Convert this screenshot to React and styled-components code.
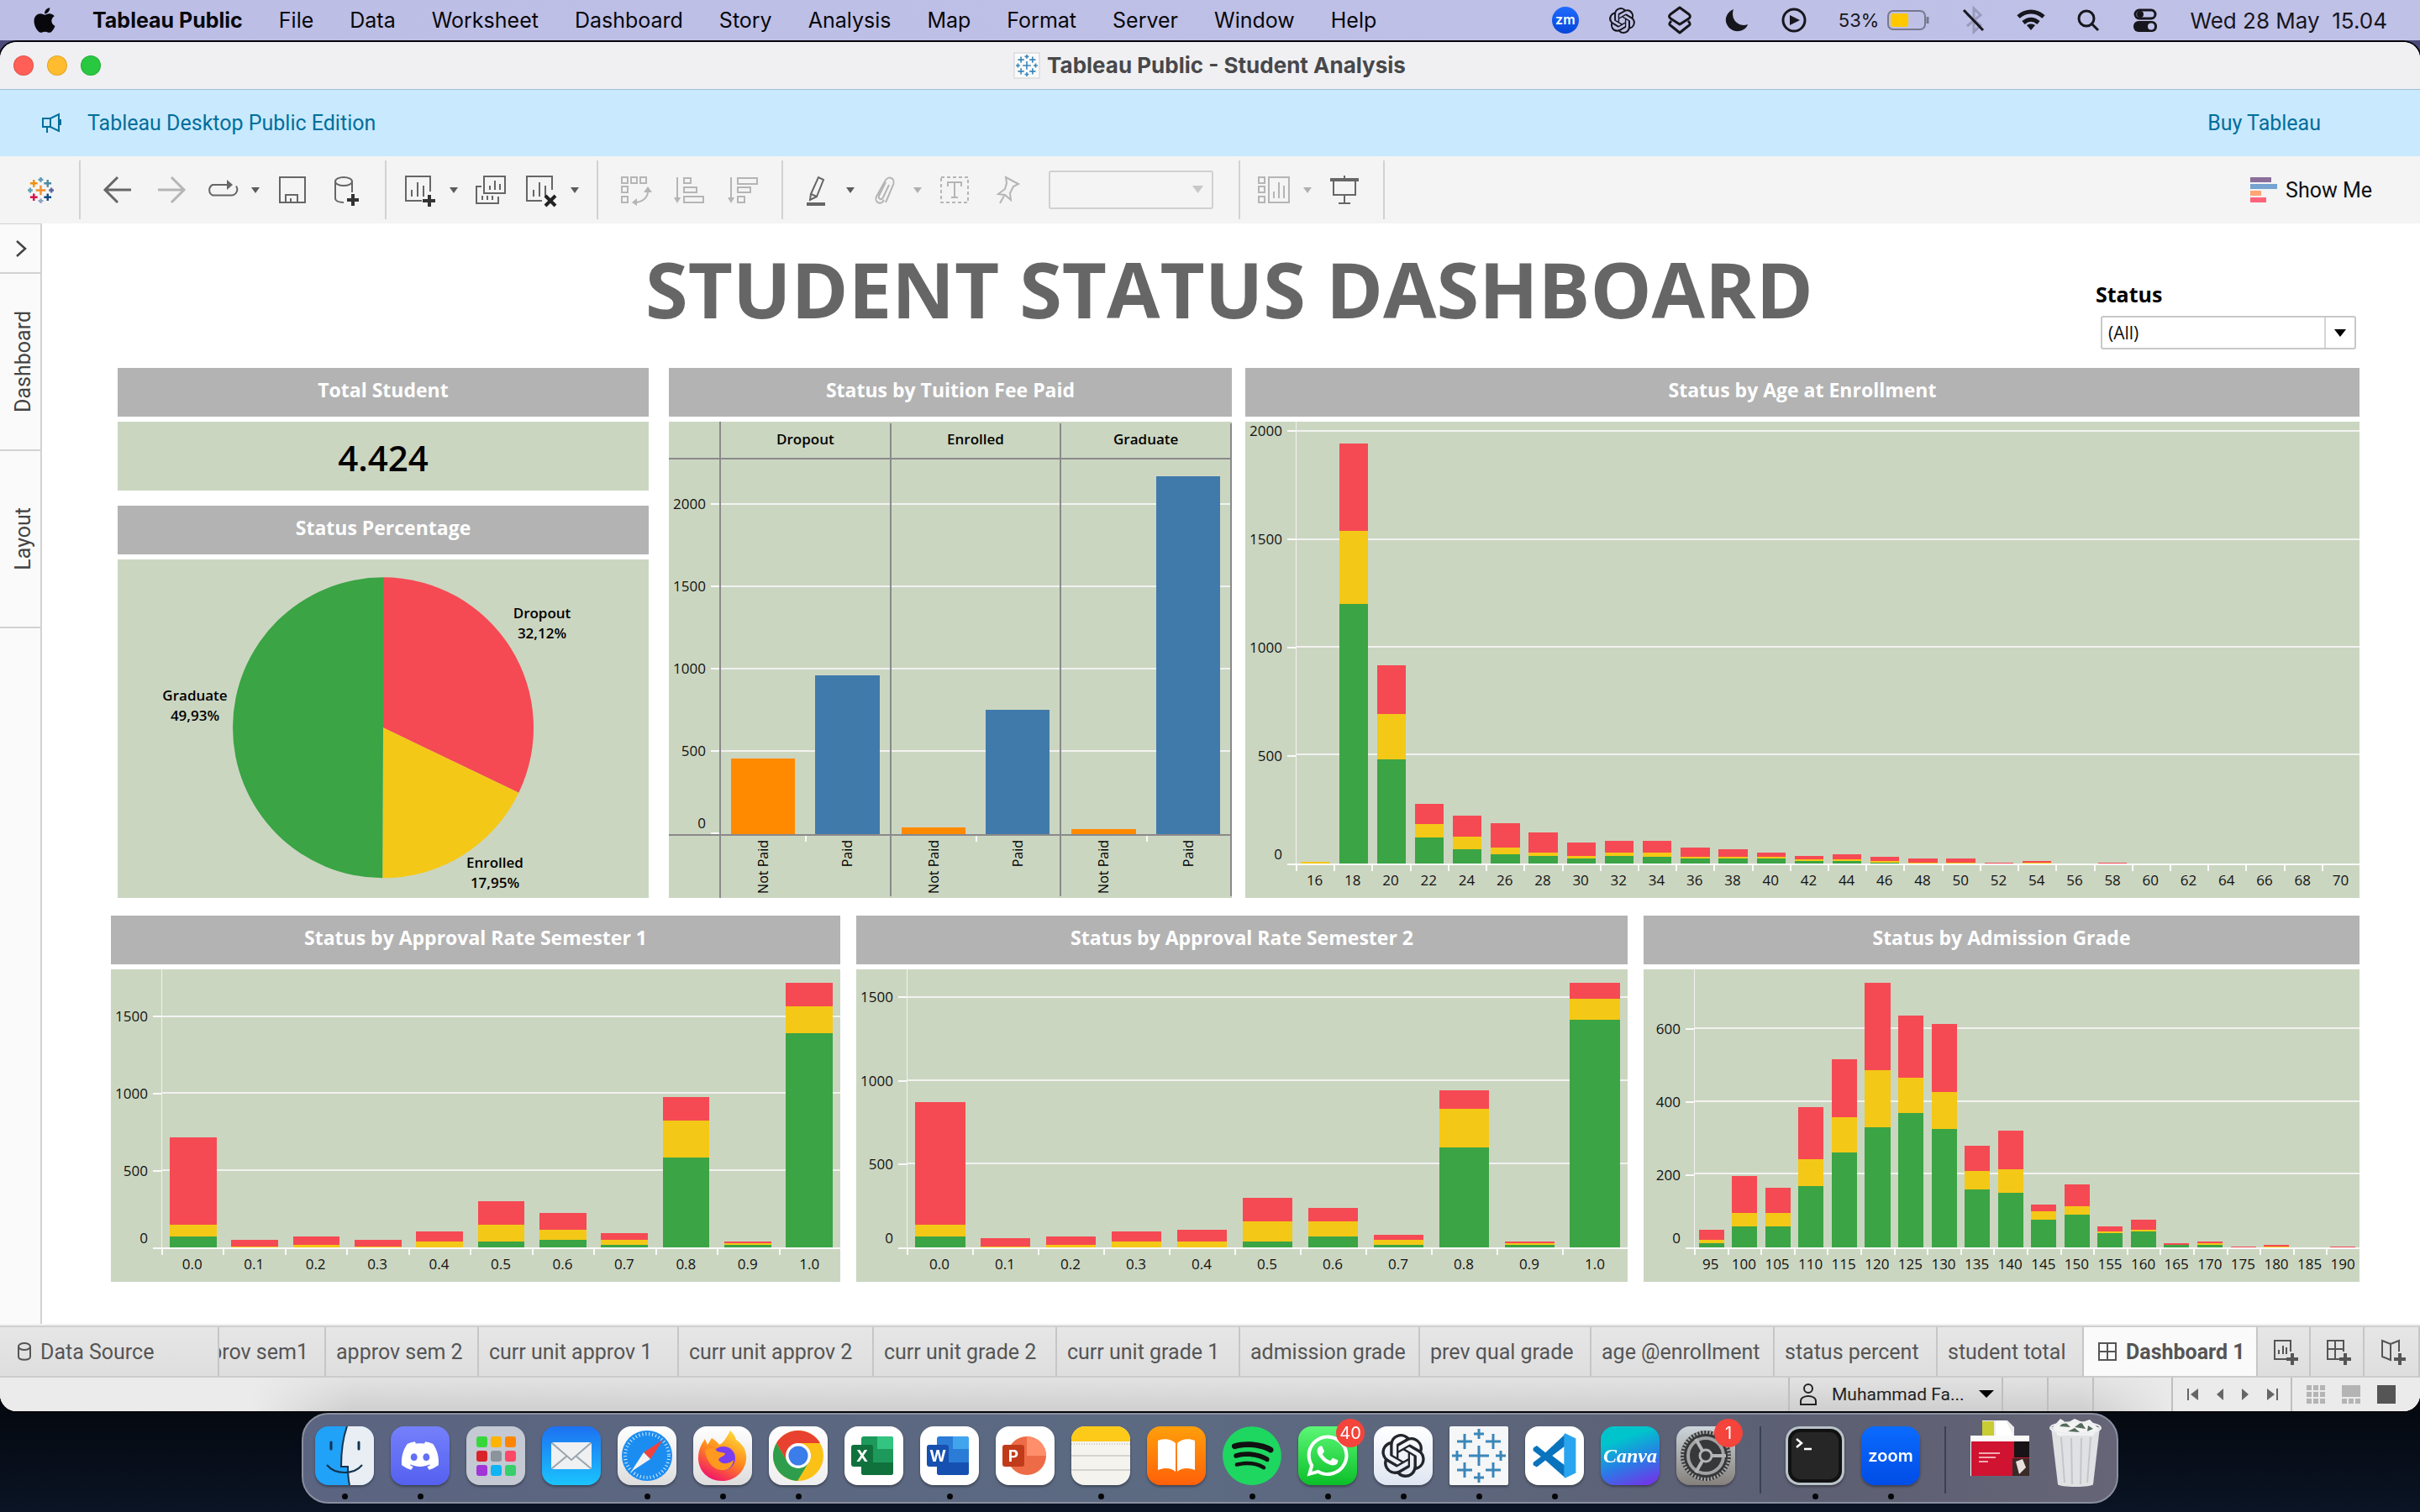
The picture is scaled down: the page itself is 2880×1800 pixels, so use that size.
import React from "react";
import styled, { createGlobalStyle, css } from "styled-components";
import { FaApple, FaDiscord, FaSpotify, FaWhatsapp } from "react-icons/fa";
import { SiOpenai } from "react-icons/si";

const MAC = `Inter, "Liberation Sans", sans-serif`;
const UI = `Roboto, "Liberation Sans", sans-serif`;
const VIZ = `"Open Sans", "Noto Sans", sans-serif`;

const RED = "#f54a53";
const YELLOW = "#f4c817";
const GREEN = "#3ba445";
const BLUE = "#407aab";
const ORANGE = "#ff8a00";
const SAGE = "#cbd6c1";
const GRID = "#f2f2f0";
const RULE = "#8a8a8a";

const Global = createGlobalStyle`
  *, *::before, *::after { box-sizing: border-box; }
  html, body, #root { height: 100%; }
  body { margin: 0; background: #04070d; font-family: ${UI}; }
  button { border: 0; background: none; padding: 0; margin: 0; font: inherit; color: inherit; }
  svg { display: block; flex: none; overflow: visible; }
`;

const Screen = styled.div`
  height: 100vh;
  display: flex;
  flex-direction: column;
  background: linear-gradient(#4b4a7a 0, #4b4a7a 90px, #04070d 200px, #04070d 92%, #0a1424 100%);
`;

/* ---------- macOS menu bar ---------- */

const MenuBar = styled.header`
  height: 48px;
  flex: none;
  display: flex;
  align-items: center;
  justify-content: space-between;
  padding: 0 39px;
  background: linear-gradient(90deg, #bdbee5, #c0c1e7);
  font-family: ${MAC};
  font-size: 25px;
  color: #08080c;
`;

const MenuList = styled.nav`
  display: flex;
  align-items: center;
  gap: 43px;
`;

const AppleMenu = styled.button`
  width: 28px;
  display: flex;
  justify-content: center;
`;

const MenuItem = styled.button`
  line-height: 32px;
  font-weight: ${(p) => (p.$app ? 700 : 400)};
  white-space: nowrap;
`;

const StatusItems = styled.div`
  display: flex;
  align-items: center;
  gap: 38px;
  color: #16161d;
`;

const StatusSlot = styled.button`
  width: 30px;
  height: 40px;
  display: flex;
  align-items: center;
  justify-content: center;
`;

const ZoomBadge = styled.span`
  flex: none;
  width: 32px;
  height: 32px;
  border-radius: 50%;
  background: linear-gradient(#1f6bff, #0646d8);
  color: #fff;
  font-size: 16px;
  font-weight: 600;
  line-height: 30px;
  text-align: center;
`;

const Battery = styled.span`
  display: flex;
  align-items: center;
  gap: 10px;
  font-size: 22px;
`;

const Clock = styled.time`
  font-size: 26px;
  white-space: pre;
`;

/* ---------- window chrome ---------- */

const Window = styled.main`
  flex: 1;
  min-height: 0;
  margin-top: 2px;
  margin-bottom: 120px;
  display: flex;
  flex-direction: column;
  border-radius: 20px;
  overflow: hidden;
  background: #fff;
  box-shadow: 0 0 0 2px #05050a;
`;

const TitleBar = styled.div`
  height: 57px;
  flex: none;
  display: grid;
  grid-template-columns: 1fr auto 1fr;
  align-items: center;
  padding: 0 16px;
  background: #f0f0f2;
  border-bottom: 1px solid #9dbfd6;
`;

const Lights = styled.div`
  display: flex;
  gap: 16px;
`;

const Light = styled.button`
  width: 24px;
  height: 24px;
  border-radius: 50%;
  background: ${(p) => p.$color};
  box-shadow: inset 0 0 0 1px rgba(0, 0, 0, 0.12);
`;

const WindowTitle = styled.h1`
  margin: 0;
  display: flex;
  align-items: center;
  gap: 9px;
  font-family: ${MAC};
  font-size: 26px;
  font-weight: 700;
  line-height: 32px;
  color: #48484b;
`;

const Banner = styled.div`
  height: 79px;
  flex: none;
  display: flex;
  align-items: center;
  padding: 0 118px 0 50px;
  gap: 30px;
  background: #c9e9ff;
  color: #006f9b;
`;

const BannerLink = styled.a`
  color: inherit;
  text-decoration: none;
  font-size: 25px;
  line-height: 32px;
  ${(p) => p.$end && css`margin-left: auto;`}
`;

const Toolbar = styled.div`
  height: 80px;
  flex: none;
  display: flex;
  align-items: center;
  background: #f4f4f4;
`;

const ToolGroup = styled.div`
  height: 70px;
  display: flex;
  align-items: center;
  padding: ${(p) => (p.$logo ? "0 30px 0 33px" : "0 14px 0 12px")};
  border-right: 2px solid #d2d2d2;
`;

const ToolButton = styled.button`
  width: ${(p) => (p.$menu ? 56 : 64)}px;
  height: 48px;
  display: flex;
  align-items: center;
  justify-content: center;
  color: ${(p) => (p.$off ? "#b5b5b5" : "#666")};
`;

const CaretButton = styled.button`
  width: 24px;
  height: 48px;
  display: flex;
  align-items: center;
  justify-content: center;
  color: ${(p) => (p.$off ? "#b0b0b0" : "#5c5c5c")};
`;

const Combo = styled.div`
  display: grid;
  align-items: center;
  margin: ${(p) => (p.$tool ? "0 16px" : "0 2px 0 6px")};
  width: ${(p) => (p.$tool ? 196 : 304)}px;
  & > * { grid-area: 1 / 1; }
  & > svg { justify-self: end; pointer-events: none; z-index: 1; }
`;

const Select = styled.select`
  appearance: none;
  opacity: 1;
  width: 100%;
  height: ${(p) => (p.$tool ? 46 : 40)}px;
  padding: 0 48px 0 7px;
  border: 2px solid ${(p) => (p.$tool ? "#d0d0d0" : "#c8c8c8")};
  border-radius: 3px;
  background: ${(p) => (p.$tool ? "#f4f4f4" : "#fff")};
  font-family: ${VIZ};
  font-size: 21px;
  color: #111;
`;

const ShowMe = styled.button`
  margin-left: auto;
  margin-right: 57px;
  display: flex;
  align-items: center;
  gap: 10px;
  font-size: 25px;
  color: #111;
`;

/* ---------- workspace ---------- */

const Workspace = styled.div`
  flex: 1;
  min-height: 0;
  display: flex;
  border-bottom: 2px solid #f1f1f1;
`;

const SidePane = styled.aside`
  width: 50px;
  flex: none;
  display: flex;
  flex-direction: column;
  background: #fafafa;
  border-right: 2px solid #d2d2d2;
  border-top: 1px solid #d2d2d2;
`;

const SideTab = styled.button`
  height: ${(p) => (p.$toggle ? 59 : 211)}px;
  padding-left: ${(p) => (p.$toggle ? 2 : 6)}px;
  display: flex;
  align-items: center;
  justify-content: center;
  border-bottom: 2px solid #d2d2d2;
  font-size: 25px;
  color: #444;
`;

const Upright = styled.span`
  writing-mode: vertical-rl;
  rotate: 180deg;
`;

const Dashboard = styled.section`
  flex: 1;
  min-width: 0;
  display: flex;
  flex-direction: column;
  padding-bottom: 50px;
`;

const Heading = styled.div`
  height: 172px;
  flex: none;
  display: grid;
  grid-template-columns: 1fr auto 1fr;
  padding: 0 74px 0 70px;
`;

const DashTitle = styled.h2`
  grid-column: 2;
  margin: 0;
  padding-top: 18px;
  font-family: ${VIZ};
  font-size: 92px;
  font-weight: 700;
  line-height: 120px;
  color: #666;
  white-space: nowrap;
`;

const Filter = styled.div`
  justify-self: end;
  padding-top: 68px;
`;

const FilterLabel = styled.label`
  display: block;
  margin-bottom: 10px;
  font-family: ${VIZ};
  font-size: 25px;
  font-weight: 700;
  line-height: 32px;
  color: #000;
`;

const Row = styled.div`
  display: grid;
  min-height: 0;
  grid-template-rows: minmax(0, 1fr);
  ${(p) =>
    p.$upper
      ? css`
          flex: 630 1 0;
          grid-template-columns: 640fr 670fr 1326fr;
          gap: 16px;
          padding: 0 72px 0 90px;
          margin-bottom: 21px;
        `
      : css`
          flex: 436 1 0;
          grid-template-columns: 868fr 918fr 852fr;
          gap: 19px;
          padding: 0 72px 0 82px;
        `}
`;

const Stack = styled.div`
  display: flex;
  flex-direction: column;
  gap: 18px;
  min-height: 0;
  padding-right: 8px;
`;

const Card = styled.article`
  display: flex;
  flex-direction: column;
  gap: 6px;
  min-width: 0;
  min-height: 0;
  ${(p) => p.$fill && css`flex: 1;`}
`;

const CardTitle = styled.h3`
  margin: 0;
  height: 58px;
  flex: none;
  padding-top: 10px;
  background: #b3b3b3;
  color: #fff;
  font-family: ${VIZ};
  font-size: 23px;
  font-weight: 700;
  line-height: 32px;
  text-align: center;
`;

const Total = styled.div`
  height: 82px;
  background: ${SAGE};
  font-family: ${VIZ};
  font-size: 42px;
  font-weight: 600;
  line-height: 86px;
  text-align: center;
`;

const ChartBody = styled.div`
  flex: 1;
  min-height: 0;
  display: grid;
  background: ${SAGE};
  font-family: ${VIZ};
  font-size: 17px;
  color: #111;
  grid-template-columns: 60px minmax(0, 1fr);
  grid-template-rows: ${(p) => (p.$facets ? "43px minmax(0, 1fr) 74px" : "minmax(0, 1fr) 39px")};
`;

const YAxis = styled.div`
  display: flex;
  flex-direction: column-reverse;
  min-height: 0;
  ${(p) => p.$ruled && css`border-top: 2px solid ${RULE}; border-bottom: 2px solid ${RULE};`}
`;

const YBand = styled.div`
  display: flex;
  align-items: flex-end;
  justify-content: flex-end;
  min-height: 0;
`;

const YLabel = styled.span`
  line-height: 24px;
  margin-bottom: ${(p) => (p.$zero ? 1 : -11)}px;
  margin-right: 6px;
`;

const YTick = styled.span`
  width: 10px;
  height: 2px;
  background: #fafafa;
`;

const Plot = styled.div`
  display: grid;
  min-height: 0;
  min-width: 0;
  grid-template: minmax(0, 1fr) / minmax(0, 1fr);
  & > * { grid-area: 1 / 1; }
  ${(p) =>
    p.$facet
      ? css`border: 2px solid ${RULE}; border-left-width: 0;`
      : css`border-bottom: 2px solid #fafafa; border-left: 1px solid ${GRID};`}
`;

const Lines = styled.div`
  display: flex;
  flex-direction: column-reverse;
`;

const Line = styled.div`
  min-height: 0;
  border-bottom: ${(p) => (p.$zero ? 0 : 2)}px solid ${GRID};
`;

const Bars = styled.div`
  display: grid;
  grid-template-columns: repeat(${(p) => p.$count}, minmax(0, 1fr));
  justify-items: center;
`;

const Bar = styled.div`
  width: 76%;
  height: 100%;
  display: flex;
  flex-direction: column-reverse;
`;

const Segment = styled.span`
  flex: none;
  background: ${(p) => p.$color};
`;

const XAxis = styled.div`
  grid-column: 2;
  display: grid;
  grid-template-columns: repeat(${(p) => p.$count}, minmax(0, 1fr));
`;

const XCell = styled.span`
  line-height: 22px;
  text-align: center;
  &::before {
    content: "";
    display: block;
    width: 2px;
    height: 7px;
    background: #fafafa;
  }
`;

const Facets = styled.div`
  display: grid;
  grid-template-columns: repeat(3, minmax(0, 1fr));
  min-height: 0;
  ${(p) => p.$framed && css`border-left: 2px solid ${RULE};`}
`;

const FacetHead = styled.span`
  margin-top: 2px;
  border-right: 2px solid ${RULE};
  font-weight: 600;
  font-size: 17px;
  line-height: 38px;
  text-align: center;
  color: #000;
`;

const FacetFoot = styled.div`
  display: grid;
  grid-template-columns: 1fr 1fr;
  margin-bottom: 2px;
  border-right: 2px solid ${RULE};
`;

const FootCell = styled.span`
  display: flex;
  justify-content: center;
  align-items: flex-start;
  padding-top: 5px;
  font-size: 16px;
  line-height: 20px;
  color: #000;
  background: ${(p) => (p.$tick ? "linear-gradient(#fafafa, #fafafa) left top / 2px 7px no-repeat" : "none")};
`;

const PieBox = styled.div`
  flex: 1;
  min-height: 0;
  background: ${SAGE};
  & > svg { width: 100%; height: 100%; }
  text { font-family: ${VIZ}; font-size: 17px; font-weight: 600; text-anchor: middle; fill: #000; }
`;

/* ---------- sheet tabs and status bar ---------- */

const Tabs = styled.div`
  height: 62px;
  flex: none;
  display: grid;
  grid-template-columns: 261fr 127fr 182fr 238fr 232fr 218fr 218fr 214fr 204fr 218fr 194fr 174fr 207fr 63fr 64fr 66fr;
  background: linear-gradient(#e6e6e6, #dedede);
  border-top: 2px solid #cfcfcf;
  border-bottom: 2px solid #cbcbcb;
`;

const Tab = styled.button`
  display: flex;
  align-items: center;
  gap: 10px;
  min-width: 0;
  overflow: hidden;
  white-space: nowrap;
  padding: 0 12px;
  border-right: 2px solid #c6c6c6;
  font-size: 25px;
  color: #555;
  ${(p) => p.$first && css`padding-left: 20px;`}
  ${(p) => p.$cut && css`justify-content: flex-end; padding-right: 19px;`}
  ${(p) => p.$icon && css`justify-content: center; padding: 0 0 0 4px;`}
  ${(p) => p.$active && css`background: #fafafa; font-weight: 700; padding: 0 10px 0 16px;`}
`;

const StatusBar = styled.footer`
  height: 40px;
  flex: none;
  display: flex;
  justify-content: flex-end;
  background:
    linear-gradient(90deg, #ebebeb 300px, transparent 420px, transparent 86%, #ebebeb 90%),
    linear-gradient(#e2e2e2, #cfcfcf);
`;

const StatusCell = styled.div`
  width: ${(p) => p.$w}px;
  display: flex;
  align-items: center;
  gap: 20px;
  padding-left: ${(p) => (p.$icons ? 17 : 0)}px;
  border-left: 2px solid #bfbfbf;
  color: #666;
`;

const User = styled.button`
  display: flex;
  align-items: center;
  gap: 17px;
  padding-left: 11px;
  font-size: 21px;
  color: #222;
`;

/* ---------- dock ---------- */

const Dock = styled.nav`
  position: fixed;
  left: 50%;
  bottom: 10px;
  translate: -50% 0;
  height: 108px;
  display: flex;
  align-items: flex-start;
  gap: 20px;
  padding: 14px 14px 0;
  border: 2px solid #8a8fa0;
  border-radius: 32px;
  background: linear-gradient(90deg, #5b6480, #5c6a82 50%, #5d5f72 85%, #656577);
`;

const DockItem = styled.button`
  position: relative;
  width: 70px;
  height: 92px;
  display: flex;
  align-items: flex-start;
  &::after {
    content: "";
    position: absolute;
    left: 32px;
    bottom: 5px;
    width: 7px;
    height: 7px;
    border-radius: 50%;
    background: ${(p) => (p.$open ? "#050608" : "transparent")};
  }
`;

const Tile = styled.span`
  width: 70px;
  height: 70px;
  flex: none;
  display: flex;
  align-items: center;
  justify-content: center;
  border-radius: 16px;
  overflow: hidden;
  background: ${(p) => p.$bg || "transparent"};
  color: ${(p) => p.$fg || "#fff"};
  ${(p) => !p.$flat && css`box-shadow: 0 2px 3px rgba(0, 0, 0, 0.35);`}
  ${(p) => p.$square && css`border-radius: 2px;`}
  ${(p) => p.$flat && css`overflow: visible;`}
`;

const Word = styled.span`
  font-family: ${(p) => (p.$script ? `"Liberation Serif", serif` : MAC)};
  font-style: ${(p) => (p.$script ? "italic" : "normal")};
  font-size: ${(p) => (p.$script ? 24 : 20)}px;
  font-weight: 600;
`;

const Badge = styled.span`
  position: absolute;
  right: -9px;
  top: -9px;
  width: 34px;
  height: 34px;
  border-radius: 50%;
  background: #f4443b;
  color: #fff;
  font-family: ${MAC};
  font-size: 20px;
  line-height: 34px;
  text-align: center;
`;

const DockRule = styled.span`
  width: 2px;
  height: 80px;
  margin: 0 9px;
  background: #3b4054;
`;

/* ---------- drawings ---------- */

const I = ({ w = 36, h = 36, children, ...rest }) => (
  <svg width={w} height={h} viewBox={`0 0 ${w} ${h}`} fill="none" stroke="currentColor" strokeWidth="2" aria-hidden="true" {...rest}>
    {children}
  </svg>
);

const Caret = () => (
  <svg width="10" height="8" viewBox="0 0 10 8" aria-hidden="true"><path d="M0 1h10L5 8z" fill="currentColor" /></svg>
);

const plus = (x, y, r) => `M${x - r} ${y}h${2 * r}M${x} ${y - r}v${2 * r}`;

const TableauMark = ({ size, colors, w = 2 }) => {
  const spots = [
    [16, 16, 6], [7.5, 7.5, 4.5], [24.5, 7.5, 4.5], [7.5, 24.5, 4.5], [24.5, 24.5, 4.5],
    [16, 3, 3], [16, 29, 3], [3, 16, 3], [29, 16, 3],
  ];
  return (
    <svg width={size} height={size} viewBox="0 0 32 32" aria-hidden="true">
      {spots.map(([x, y, r], i) => (
        <path key={i} d={plus(x, y, r)} stroke={colors[i % colors.length]} strokeWidth={w} />
      ))}
    </svg>
  );
};

const LOGO = ["#f28e2b", "#f0900f", "#4e8aa0", "#d3134b", "#114a86", "#5b9bb5", "#8ea3c4", "#5fa5b8", "#5b659c"];

const Icons = {
  back: <I><path d="M34 18H3M18 3 3 18l15 15" strokeWidth="3" /></I>,
  forward: <I><path d="M2 18h31M18 3l15 15-15 15" strokeWidth="3" /></I>,
  replay: <I w={42}><path d="M31 12H10a7 7 0 0 0 0 12.500H33a7 7 0 0 0 5-11" /><path d="m27 6 7 6-7 6z" fill="currentColor" stroke="none" /></I>,
  save: <I><path d="M3 3h30v30H3zM10 33V24h14v9M16 33v-5" /></I>,
  data: <I w={32}><ellipse cx="13" cy="8" rx="10" ry="5" /><path d="M3 8v20c0 3 4 5 10 5M23 8v13" /><path d="M17 30h14M24 23v14" strokeWidth="4" stroke="#333" /></I>,
  newSheet: <I w={38}><path d="M31 20V2H2v29h19M9 26v-8M16 26V9M23 26v-13" /><path d="M22 31h15M30 24v14" strokeWidth="4" stroke="#333" /></I>,
  copySheet: <I w={38}><path d="M11 2h25v20H11zM18 18v-5M24 18V7M30 18v-7M8 14H2v20h26v-8M9 30v-5M15 30v-5M21 30v-5" /></I>,
  clearSheet: <I w={38}><path d="M32 18V2H2v29h18M10 26v-8M17 26V9M24 26v-13" /><path d="m24 25 12 12M36 25 24 37" strokeWidth="4" stroke="#222" /></I>,
  swap: <I><path d="M2 3h7v7H2zM13 3h7v7h-7zM24 3h7v7h-7zM2 14h7v7H2zM2 26h7v7H2zM33 20c0 7-6 12-14 13" /><path d="m28 21 5-7 5 7zM20 28v9l-6-4z" fill="currentColor" stroke="none" /></I>,
  sortAsc: <I><path d="M4 3v24M12 4h8v6h-8zM12 15h15v6H12zM12 26h23v7H12z" /><path d="M0 27h8l-4 7z" fill="currentColor" stroke="none" /></I>,
  sortDesc: <I><path d="M4 3v24M12 4h23v7H12zM12 15h15v6H12zM12 26h8v7h-8z" /><path d="M0 27h8l-4 7z" fill="currentColor" stroke="none" /></I>,
  pen: <I w={24}><path d="m5 23 9-20 6 3-8 20zM5 23l-1 7 8-4" /><path d="M0 35h22" strokeWidth="4" /></I>,
  clip: <I w={26}><path d="M19 12 12 27c-2 4-6 2-5-2l8-16M15 33 24 12c3-8-6-12-10-4L4 26c-3 7 6 11 9 4" /></I>,
  text: <I><path d="M2 3h32v30H2z" strokeDasharray="4 3" /><path d="M10 14V9h16v5M18 9v18M14 27h8" /></I>,
  pin: <I w={28}><path d="m11 3 15 8-6 3-4 8 1 8-7-6-8-1 8-6 2-7zM9 25 4 34" /></I>,
  cards: <I w={40}><path d="M2 3h7v7H2zM2 14h7v7H2zM2 26h7v7H2zM14 3h24v30H14zM20 28v-8M26 28V9M32 28V13" /></I>,
  present: <I><path d="M1 6h34" strokeWidth="4" /><path d="M18 1v4M5 8v16h26V8M18 24v10M11 34h14" /></I>,
};

const finder = (
  <svg width="70" height="70" viewBox="0 0 70 70">
    <path fill="#1fa2f8" d="M0 0h70v70H0z" />
    <path fill="#e8eef4" d="M38 0h32v70H41c-2-9-2-15-2-22h-8C31 30 33 14 38 0z" />
    <path d="M19 19v8M52 19v8" stroke="#14334f" strokeWidth="3" strokeLinecap="round" />
    <path d="M14 46c10 12 32 12 42 0M38 0c-5 14-7 30-7 48h8c0 7 0 13 2 22" stroke="#14334f" strokeWidth="2" fill="none" />
  </svg>
);

const launchpad = (
  <svg width="70" height="70" viewBox="0 0 70 70">
    {["#37d73c", "#ffb400", "#ff8500", "#d9232b", "#8c949b", "#ff4867", "#a136d8", "#0fb4f2", "#37cf6a"].map((c, i) => (
      <rect key={c} x={12 + (i % 3) * 17} y={12 + Math.floor(i / 3) * 17} width="13" height="13" rx="3" fill={c} />
    ))}
  </svg>
);

const mail = (
  <svg width="70" height="70" viewBox="0 0 70 70">
    <rect x="11" y="19" width="48" height="32" rx="3" fill="#eef0f2" />
    <path d="m12 20 23 20 23-20M12 50l18-15M58 50 40 35" stroke="#9aa4ad" strokeWidth="2" fill="none" />
  </svg>
);

const safari = (
  <svg width="70" height="70" viewBox="0 0 70 70">
    <circle cx="35" cy="35" r="30" fill="#1c8df0" />
    <circle cx="35" cy="35" r="26" fill="none" stroke="#d7ecff" strokeWidth="4" strokeDasharray="1 3" />
    <path d="m54 16-15 23-8-8z" fill="#f2413a" /><path d="m16 54 15-23 8 8z" fill="#f2f2f2" />
  </svg>
);

const firefox = (
  <svg width="70" height="70" viewBox="0 0 70 70">
    <defs><linearGradient id="ff" x1=".8" y1="0" x2=".3" y2="1"><stop stopColor="#ffe03a" /><stop offset=".5" stopColor="#ff8a1c" /><stop offset="1" stopColor="#f2126b" /></linearGradient></defs>
    <path d="M44 5c4 4 6 7 7 11 10 7 13 15 12 24-2 15-14 25-29 25C18 65 6 53 6 38c0-9 3-16 8-23l3 7 5-8c4 2 7 5 9 8 5-2 9-9 13-17z" fill="url(#ff)" />
    <circle cx="36" cy="38" r="14" fill="#7a3df0" />
    <path d="M14 28c6-3 12-2 15 2l9 2c0 4-7 4-8 8 4 6 12 5 18 0-1 9-8 13-15 12-10-1-18-11-19-24z" fill="#ff9a1e" />
  </svg>
);

const chrome = (
  <svg width="70" height="70" viewBox="0 0 70 70">
    <circle cx="35" cy="35" r="30" fill="#fbc116" />
    <path d="M9 20a30 30 0 0 1 52 0H35L22 42z" fill="#e8412f" />
    <path d="M9 20a30 30 0 0 0 25 45l14-23H22z" fill="#2f9e4c" />
    <circle cx="35" cy="35" r="15" fill="#fff" /><circle cx="35" cy="35" r="11.500" fill="#3b7de9" />
  </svg>
);

const office = (letter, dark, mid, light, round) => (
  <svg width="70" height="70" viewBox="0 0 70 70">
    {round ? (
      <><circle cx="37" cy="35" r="23" fill={mid} /><path d="M37 12a23 23 0 0 1 23 23H37z" fill={light} /></>
    ) : (
      <><rect x="20" y="12" width="38" height="46" rx="3" fill={mid} /><path d="M39 12h16a3 3 0 0 1 3 3v12H39z" fill={light} /><path d="M20 43h38v12a3 3 0 0 1-3 3H23a3 3 0 0 1-3-3z" fill={dark} /></>
    )}
    <rect x="8" y="22" width="26" height="26" rx="3" fill={dark} />
    <text x="21" y="42" textAnchor="middle" fontFamily="Inter, sans-serif" fontWeight="700" fontSize="19" fill="#fff">{letter}</text>
  </svg>
);

const notes = (
  <svg width="70" height="70" viewBox="0 0 70 70">
    <path fill="#f4f3ee" d="M0 0h70v70H0z" /><path fill="#fdca19" d="M0 0h70v18H0z" />
    <path d="M0 21h70" stroke="#a9a9a4" strokeDasharray="1 2" /><path d="M0 35h70M0 52h70" stroke="#d4d3cd" strokeWidth="2" />
  </svg>
);

const books = (
  <svg width="70" height="70" viewBox="0 0 70 70">
    <path d="M34 20c-5-5-14-6-21-3v35c7-3 16-3 21 2zM36 20c5-5 14-6 21-3v35c-7-3-16-3-21 2z" fill="#fff" />
  </svg>
);

const vscode = (
  <svg width="54" height="54" viewBox="0 0 100 100">
    <path d="M74 2 30 43 11 28l-8 5v6l17 13L3 65v6l8 4 19-15 44 39V72L45 50l29-22z" fill="#0a73bd" />
    <path d="m74 1 23 11v76L74 99c-2 0-3-1-3-3V4c0-2 1-3 3-3z" fill="#28a5ee" />
  </svg>
);

const gear = (
  <svg width="70" height="70" viewBox="0 0 70 70" fill="none">
    <circle cx="35" cy="35" r="30" fill="#36383a" />
    <circle cx="35" cy="35" r="28" stroke="#a8a8a8" strokeWidth="4" strokeDasharray="2 2" />
    <circle cx="35" cy="35" r="21" stroke="#a2a2a2" strokeWidth="4" />
    <circle cx="35" cy="35" r="7" stroke="#b5b5b5" strokeWidth="3" />
    <path d="M42 35h17M31 29 23 15M31 41l-8 14" stroke="#b5b5b5" strokeWidth="4" />
  </svg>
);

const terminal = (
  <svg width="70" height="70" viewBox="0 0 70 70">
    <rect width="70" height="70" rx="16" fill="#b9c2c9" /><rect x="3" y="3" width="64" height="64" rx="14" fill="#111" /><rect x="7" y="7" width="56" height="56" rx="10" fill="#262626" />
    <path d="m13 15 6 5-6 5M22 27h9" stroke="#fff" strokeWidth="2.500" fill="none" />
  </svg>
);

const papers = (
  <svg width="70" height="70" viewBox="0 0 70 70">
    <path d="M14-7h30l8 8v18H14z" fill="#ececec" /><path d="M14-6h14v18H14z" fill="#c9cc33" /><path d="M30-7h12l9 18H30z" fill="#fff" />
    <rect y="11" width="70" height="48" fill="#fafafa" /><path d="M1 18h69v41H1z" fill="#cf1331" /><path d="M52 18h18v19H52z" fill="#181316" /><path d="M50 38h20v21H50z" fill="#3a2a28" /><path d="m54 42 8-3 4 10-8 8z" fill="#e8e0da" />
    <path d="M10 32h25M10 37h20M10 42h11" stroke="#f3a8b2" strokeWidth="2" />
  </svg>
);

const trash = (
  <svg width="70" height="76" viewBox="0 0 70 76">
    <path d="M6 4h58l-8 68c-1 4-41 4-42 0z" fill="#dfe1e3" />
    <path d="M18 16l4 54M30 17l1 55M42 17l-1 55M53 16l-4 54" stroke="#c3c6ca" strokeWidth="2" />
    <path d="m8 4 9-10 8 5 9-5 9 4 9-3 10 10-6 9H14z" fill="#f3f3f3" /><path d="m16 3 6-6 7 7zM34 4l8-6 5 8zM26 9l8-4 6 5zM50 2l6 4-7 3z" fill="#536a5c" />
    <ellipse cx="35" cy="5" rx="30" ry="7" fill="none" stroke="#eceef0" strokeWidth="2" />
  </svg>
);

/* ---------- charts ---------- */

const bandsFor = (max, step) => {
  const out = [];
  for (let v = 0; v <= max; v += step) {
    out.push({ v, size: (Math.min(step, max - v) / max) * 100 });
  }
  return out;
};

const Scale = ({ max, step, ruled }) => (
  <YAxis $ruled={ruled}>
    {bandsFor(max, step).map(({ v, size }) => (
      <YBand key={v} style={{ height: `${size}%` }}>
        <YLabel $zero={v === 0}>{v}</YLabel>
        <YTick />
      </YBand>
    ))}
  </YAxis>
);

const PlotArea = ({ max, step, bars, facet }) => (
  <Plot $facet={facet}>
    <Lines>
      {bandsFor(max, step).map(({ v, size }) => (
        <Line key={v} $zero={v === 0} style={{ height: `${size}%` }} />
      ))}
    </Lines>
    <Bars $count={bars.length}>
      {bars.map((parts, i) => (
        <Bar key={i}>
          {parts.map(([value, color]) => (
            <Segment key={color} $color={color} style={{ height: `${(value / max) * 100}%` }} />
          ))}
        </Bar>
      ))}
    </Bars>
  </Plot>
);

const StackedChart = ({ title, max, step, rows }) => (
  <Card>
    <CardTitle>{title}</CardTitle>
    <ChartBody>
      <Scale max={max} step={step} />
      <PlotArea max={max} step={step} bars={rows.map(([, g, y, r]) => [[g, GREEN], [y, YELLOW], [r, RED]])} />
      <XAxis $count={rows.length}>
        {rows.map(([label]) => <XCell key={label}>{label}</XCell>)}
      </XAxis>
    </ChartBody>
  </Card>
);

const TUITION = [["Dropout", 459, 962], ["Enrolled", 41, 757], ["Graduate", 31, 2176]];

const TuitionChart = () => (
  <Card>
    <CardTitle>Status by Tuition Fee Paid</CardTitle>
    <ChartBody $facets>
      <span />
      <Facets $framed>
        {TUITION.map(([name]) => <FacetHead key={name}>{name}</FacetHead>)}
      </Facets>
      <Scale max={2278} step={500} ruled />
      <Facets $framed>
        {TUITION.map(([name, no, yes]) => (
          <PlotArea key={name} facet max={2278} step={500} bars={[[[no, ORANGE]], [[yes, BLUE]]]} />
        ))}
      </Facets>
      <span />
      <Facets $framed>
        {TUITION.map(([name]) => (
          <FacetFoot key={name}>
            <FootCell><Upright>Not Paid</Upright></FootCell>
            <FootCell $tick><Upright>Paid</Upright></FootCell>
          </FacetFoot>
        ))}
      </Facets>
    </ChartBody>
  </Card>
);

const AGE = [
  [16, 0, 6, 0], [18, 1204, 336, 408], [20, 481, 210, 226], [22, 121, 62, 93], [24, 66, 56, 100],
  [26, 43, 31, 110], [28, 34, 16, 93], [30, 20, 15, 62], [32, 34, 16, 54], [34, 28, 23, 54],
  [36, 20, 8, 46], [38, 20, 8, 38], [40, 20, 8, 23], [42, 11, 8, 15], [44, 11, 8, 23],
  [46, 4, 8, 16], [48, 0, 4, 16], [50, 0, 4, 16], [52, 0, 0, 4], [54, 0, 4, 8], [56, 0, 0, 0],
  [58, 0, 0, 4], [60, 0, 0, 0], [62, 0, 0, 0], [64, 0, 0, 0], [66, 0, 0, 0], [68, 0, 0, 0], [70, 0, 0, 0],
];

const SEM1 = [
  ["0.0", 71, 77, 569], ["0.1", 0, 5, 44], ["0.2", 0, 16, 55], ["0.3", 0, 5, 44], ["0.4", 0, 38, 66],
  ["0.5", 38, 110, 153], ["0.6", 49, 66, 110], ["0.7", 16, 33, 44], ["0.8", 586, 241, 153],
  ["0.9", 16, 11, 11], ["1.0", 1396, 175, 153],
];

const SEM2 = [
  ["0.0", 65, 70, 735], ["0.1", 0, 5, 50], ["0.2", 0, 15, 50], ["0.3", 0, 35, 60], ["0.4", 0, 35, 70],
  ["0.5", 35, 121, 141], ["0.6", 65, 91, 81], ["0.7", 15, 30, 30], ["0.8", 599, 232, 111],
  ["0.9", 15, 10, 10], ["1.0", 1364, 131, 91],
];

const GRADE = [
  [95, 12, 9, 28], [100, 58, 37, 102], [105, 58, 37, 69], [110, 168, 74, 143], [115, 261, 97, 161],
  [120, 330, 157, 240], [125, 371, 97, 171], [130, 325, 102, 189], [135, 159, 51, 69], [140, 150, 65, 106],
  [145, 76, 23, 18], [150, 90, 23, 60], [155, 39, 5, 14], [160, 44, 5, 28], [165, 7, 0, 5],
  [170, 7, 5, 5], [175, 0, 0, 3], [180, 0, 3, 5], [185, 0, 0, 0], [190, 0, 0, 3],
];

const SHARES = [["Dropout", 32.12, RED, 505, 70], ["Enrolled", 17.95, YELLOW, 449, 367], ["Graduate", 49.93, GREEN, 92, 168]];

const Pie = () => {
  const cx = 316, cy = 200, r = 179;
  let from = 0;
  return (
    <PieBox>
      <svg viewBox="0 0 632 402" role="img" aria-label="Status Percentage">
        {SHARES.map(([name, share, color, tx, ty]) => {
          const a = from * 2 * Math.PI;
          from += share / 100;
          const b = from * 2 * Math.PI;
          const at = (t) => `${cx + r * Math.sin(t)} ${cy - r * Math.cos(t)}`;
          return (
            <g key={name}>
              <path d={`M${cx} ${cy}L${at(a)}A${r} ${r} 0 0 1 ${at(b)}z`} fill={color} />
              <text x={tx} y={ty}>{name}</text>
              <text x={tx} y={ty + 24}>{share.toFixed(2).replace(".", ",")}%</text>
            </g>
          );
        })}
      </svg>
    </PieBox>
  );
};

/* ---------- page ---------- */

const MENUS = ["File", "Data", "Worksheet", "Dashboard", "Story", "Analysis", "Map", "Format", "Server", "Window", "Help"];
const SHEETS = ["approv sem 2", "curr unit approv 1", "curr unit approv 2", "curr unit grade 2", "curr unit grade 1", "admission grade", "prev qual grade", "age @enrollment", "status percent", "student total"];

const Tool = ({ name, icon, off, menu }) => (
  <>
    <ToolButton $off={off} $menu={menu} aria-label={name}>{Icons[icon]}</ToolButton>
    {menu && <CaretButton $off={off} aria-label={`${name} options`}><Caret /></CaretButton>}
  </>
);

const DockApp = ({ name, open, badge, children, ...tile }) => (
  <DockItem $open={open} aria-label={name}>
    <Tile {...tile}>{children}</Tile>
    {badge && <Badge>{badge}</Badge>}
  </DockItem>
);

export default function App() {
  return (
    <Screen>
      <Global />
      <MenuBar>
        <MenuList>
          <AppleMenu aria-label="Apple menu"><FaApple size={34} /></AppleMenu>
          <MenuItem $app>Tableau Public</MenuItem>
          {MENUS.map((m) => <MenuItem key={m}>{m}</MenuItem>)}
        </MenuList>
        <StatusItems>
          <StatusSlot aria-label="Zoom"><ZoomBadge>zm</ZoomBadge></StatusSlot>
          <StatusSlot aria-label="ChatGPT"><SiOpenai size={31} /></StatusSlot>
          <StatusSlot aria-label="Shortcuts">
            <I w={30} h={34} strokeWidth="3" strokeLinejoin="round"><path d="M15 2 26 10c2 2 2 3 0 5l-11 7-11-7c-2-2-2-3 0-5zM5 18c-3 3-3 4 0 6l10 8 10-8c3-2 3-3 0-6" /></I>
          </StatusSlot>
          <StatusSlot aria-label="Focus"><I w={28} h={28} stroke="none"><path fill="currentColor" d="M10 1C3 4 0 10 1 16c2 8 9 12 16 11 5-1 9-4 10-8-11 4-21-6-17-18z" /></I></StatusSlot>
          <StatusSlot aria-label="Now Playing"><I w={30} h={30}><circle cx="15" cy="15" r="13" strokeWidth="3" /><path fill="currentColor" stroke="none" d="m10 9 12 6-12 6z" /></I></StatusSlot>
          <Battery>
            53%
            <I w={50} h={24}><rect x="1" y="1" width="44" height="22" rx="6" stroke="#77788f" /><rect x="4" y="4" width="21" height="16" rx="3" fill="#ffc800" stroke="none" /><path d="M48 8v8" stroke="#77788f" strokeWidth="3" /></I>
          </Battery>
          <StatusSlot aria-label="Bluetooth"><I w={26} h={32}><path d="m5 9 16 13-8 8V2l8 8L5 23" stroke="#9a9bbd" strokeWidth="3" /><path d="m1 4 23 24" strokeWidth="3" /></I></StatusSlot>
          <StatusSlot aria-label="Wi-Fi"><I w={34} h={26} strokeWidth="5"><path d="M2 9c9-8 21-8 30 0M8 16c6-5 12-5 18 0" /><path d="M17 25l-5-6c3-2 7-2 10 0z" fill="currentColor" stroke="none" /></I></StatusSlot>
          <StatusSlot aria-label="Search"><I w={26} h={26} strokeWidth="3"><circle cx="11" cy="11" r="9" /><path d="m17 17 8 8" /></I></StatusSlot>
          <StatusSlot aria-label="Control Centre"><I w={28} h={28}><rect x="2" y="2" width="24" height="10" rx="5" strokeWidth="3" /><circle cx="8" cy="7" r="3" fill="currentColor" /><rect y="15" width="28" height="13" rx="6" fill="currentColor" stroke="none" /><circle cx="21" cy="21.500" r="4" fill="#c0c1e7" stroke="none" /></I></StatusSlot>
          <Clock>{"Wed 28 May  15.04"}</Clock>
        </StatusItems>
      </MenuBar>

      <Window>
        <TitleBar>
          <Lights>
            <Light $color="#ff5f57" aria-label="Close" />
            <Light $color="#febc2e" aria-label="Minimise" />
            <Light $color="#28c840" aria-label="Zoom window" />
          </Lights>
          <WindowTitle>
            <svg width="30" height="30" viewBox="0 0 30 30">
              <rect width="30" height="30" fill="#fafafa" stroke="#cfcfcf" />
              <g transform="translate(2 2) scale(.81)"><TableauMark size={32} colors={["#3a86b8"]} /></g>
            </svg>
            Tableau Public - Student Analysis
          </WindowTitle>
        </TitleBar>

        <Banner>
          <I w={24} h={24}><path d="M1 6h9l10-5v20l-10-5H1zM10 6v10M6 16v7M22 7v7" /></I>
          <BannerLink href="#edition">Tableau Desktop Public Edition</BannerLink>
          <BannerLink href="#buy" $end>Buy Tableau</BannerLink>
        </Banner>

        <Toolbar>
          <ToolGroup $logo><TableauMark size={31} colors={LOGO} w={2.5} /></ToolGroup>
          <ToolGroup>
            <Tool name="Undo" icon="back" />
            <Tool name="Redo" icon="forward" off />
            <Tool name="Replay" icon="replay" menu />
            <Tool name="Save" icon="save" />
            <Tool name="New data source" icon="data" />
          </ToolGroup>
          <ToolGroup>
            <Tool name="New worksheet" icon="newSheet" menu />
            <Tool name="Duplicate" icon="copySheet" />
            <Tool name="Clear sheet" icon="clearSheet" menu />
          </ToolGroup>
          <ToolGroup>
            <Tool name="Swap" icon="swap" off />
            <Tool name="Sort ascending" icon="sortAsc" off />
            <Tool name="Sort descending" icon="sortDesc" off />
          </ToolGroup>
          <ToolGroup>
            <Tool name="Highlight" icon="pen" menu />
            <Tool name="Group" icon="clip" off menu />
            <Tool name="Labels" icon="text" off />
            <Tool name="Fix axes" icon="pin" off />
            <Combo $tool>
              <Select $tool disabled aria-label="Fit" />
              <svg width="30" height="10" viewBox="0 0 30 10"><path d="M5 0h13l-6.500 9z" fill="#c8c8c8" /></svg>
            </Combo>
          </ToolGroup>
          <ToolGroup>
            <Tool name="Cards" icon="cards" off menu />
            <Tool name="Presentation mode" icon="present" />
          </ToolGroup>
          <ShowMe>
            <svg width="32" height="30" viewBox="0 0 32 30">
              <path fill="#8b6f9b" d="M0 0h25v6H0z" /><path fill="#76a3d0" d="M0 8h32v6H0z" /><path fill="#ffa574" d="M0 16h13v6H0z" /><path fill="#ff637b" d="M0 24h19v6H0z" />
            </svg>
            Show Me
          </ShowMe>
        </Toolbar>

        <Workspace>
          <SidePane>
            <SideTab $toggle aria-label="Expand"><I w={12} h={20}><path d="m1 1 10 9-10 9" strokeWidth="2.500" /></I></SideTab>
            <SideTab><Upright>Dashboard</Upright></SideTab>
            <SideTab><Upright>Layout</Upright></SideTab>
          </SidePane>

          <Dashboard>
            <Heading>
              <DashTitle>STUDENT STATUS DASHBOARD</DashTitle>
              <Filter>
                <FilterLabel htmlFor="status">Status</FilterLabel>
                <Combo>
                  <Select id="status" defaultValue="(All)"><option>(All)</option></Select>
                  <svg width="38" height="36" viewBox="0 0 38 36"><path d="M1 0v36" stroke="#d6d6d6" strokeWidth="2" /><path d="M12 14h14l-7 9z" fill="#000" /></svg>
                </Combo>
              </Filter>
            </Heading>

            <Row $upper>
              <Stack>
                <Card>
                  <CardTitle>Total Student</CardTitle>
                  <Total>4.424</Total>
                </Card>
                <Card $fill>
                  <CardTitle>Status Percentage</CardTitle>
                  <Pie />
                </Card>
              </Stack>
              <TuitionChart />
              <StackedChart title="Status by Age at Enrollment" max={2048} step={500} rows={AGE} />
            </Row>
            <Row>
              <StackedChart title="Status by Approval Rate Semester 1" max={1815} step={500} rows={SEM1} />
              <StackedChart title="Status by Approval Rate Semester 2" max={1671} step={500} rows={SEM2} />
              <StackedChart title="Status by Admission Grade" max={766} step={200} rows={GRADE} />
            </Row>
          </Dashboard>
        </Workspace>

        <Tabs>
          <Tab $first>
            <I w={18} h={24}><ellipse cx="9" cy="6" rx="7" ry="4" /><path d="M2 6v12c0 5 14 5 14 0V6" /></I>
            Data Source
          </Tab>
          <Tab $cut>approv sem1</Tab>
          {SHEETS.map((s) => <Tab key={s}>{s}</Tab>)}
          <Tab $active>
            <I w={24} h={24}><path d="M2 2h20v20H2zM12 2v20M2 12h20" /></I>
            Dashboard 1
          </Tab>
          <Tab $icon aria-label="New Worksheet"><I w={30} h={30}><path d="M21 15V2H2v22h14M7 18v-5M12 18V8M16 18v-8" /><path d="M16 24h14M23 17v14" strokeWidth="4" /></I></Tab>
          <Tab $icon aria-label="New Dashboard"><I w={30} h={30}><path d="M21 15V2H2v22h14M11 2v22M2 12h19" /><path d="M16 24h14M23 17v14" strokeWidth="4" /></I></Tab>
          <Tab $icon aria-label="New Story"><I w={30} h={30}><path d="M12 6 2 2v19l10 4V6l10-4v13" /><path d="M16 24h14M23 17v14" strokeWidth="4" /></I></Tab>
        </Tabs>

        <StatusBar>
          <StatusCell $w={254}>
            <User>
              <I w={22} h={28}><circle cx="11" cy="7" r="5" /><path d="M2 26v-4c0-8 18-8 18 0v4z" /></I>
              Muhammad Fa...
              <svg width="18" height="10" viewBox="0 0 18 10"><path d="M0 0h18L9 9z" fill="#000" /></svg>
            </User>
          </StatusCell>
          <StatusCell $w={54} />
          <StatusCell $w={54} />
          <StatusCell $w={94} />
          <StatusCell $w={142} $icons>
            <I w={14} h={14} stroke="none"><path fill="currentColor" d="M0 0h2v14H0zM13 0v14L4 7z" /></I>
            <I w={10} h={14} stroke="none"><path fill="currentColor" d="M9 0v14L1 7z" /></I>
            <I w={10} h={14} stroke="none"><path fill="currentColor" d="M1 0v14l8-7z" /></I>
            <I w={14} h={14} stroke="none"><path fill="currentColor" d="M12 0h2v14h-2zM1 0v14l9-7z" /></I>
          </StatusCell>
          <StatusCell $w={154} $icons>
            <I w={22} h={22} stroke="none">{[0, 8, 16].flatMap((y) => [0, 8, 16].map((x) => <rect key={`${x}-${y}`} x={x} y={y} width="6" height="6" fill="#b4b4b4" />))}</I>
            <I w={22} h={22} stroke="none"><path fill="#b4b4b4" d="M0 0h22v14H0zM0 16h6v6H0zM8 16h6v6H8zM16 16h6v6h-6z" /></I>
            <I w={22} h={22} stroke="none"><path fill="#555" d="M0 0h22v22H0z" /></I>
          </StatusCell>
        </StatusBar>
      </Window>

      <Dock>
        <DockApp name="Finder" open>{finder}</DockApp>
        <DockApp name="Discord" open $bg="linear-gradient(#7480fb, #5561ef)"><FaDiscord size={48} /></DockApp>
        <DockApp name="Launchpad" $bg="#c5c9d3">{launchpad}</DockApp>
        <DockApp name="Mail" $bg="linear-gradient(#1d71f2, #1ac4fd)">{mail}</DockApp>
        <DockApp name="Safari" open $bg="linear-gradient(#fff, #ddd)">{safari}</DockApp>
        <DockApp name="Firefox" open $bg="linear-gradient(#fff, #ddd)">{firefox}</DockApp>
        <DockApp name="Chrome" open $bg="linear-gradient(#fff, #eee)">{chrome}</DockApp>
        <DockApp name="Excel" $bg="#fff">{office("X", "#10713d", "#1d9a5b", "#33c481")}</DockApp>
        <DockApp name="Word" open $bg="#fff">{office("W", "#1650b0", "#2b7cd6", "#41a5ee")}</DockApp>
        <DockApp name="PowerPoint" $bg="#fff">{office("P", "#c13b1b", "#ed6c47", "#ff8f6b", true)}</DockApp>
        <DockApp name="Notes" open>{notes}</DockApp>
        <DockApp name="Books" $bg="linear-gradient(#ff9f0a, #ff6009)">{books}</DockApp>
        <DockApp name="Spotify" open $flat $bg="radial-gradient(#111 60%, transparent 61%)" $fg="#1ed760"><FaSpotify size={72} /></DockApp>
        <DockApp name="WhatsApp" open badge="40" $bg="linear-gradient(#5cf777, #0bbf28)"><FaWhatsapp size={56} /></DockApp>
        <DockApp name="ChatGPT" open $bg="linear-gradient(#fff, #dfe6f2)" $fg="#22262c"><SiOpenai size={52} /></DockApp>
        <DockApp name="Tableau" open $square $bg="#f5f6f7"><TableauMark size={64} colors={["#3a86b8"]} w={1.5} /></DockApp>
        <DockApp name="Visual Studio Code" open $bg="#fff">{vscode}</DockApp>
        <DockApp name="Canva" $bg="linear-gradient(160deg, #00c4cc 25%, #2a7be6 60%, #7d2ae8)"><Word $script>Canva</Word></DockApp>
        <DockApp name="System Settings" badge="1" $bg="linear-gradient(#cdd6dc, #85807b)">{gear}</DockApp>
        <DockRule />
        <DockApp name="Terminal" open>{terminal}</DockApp>
        <DockApp name="Zoom Workplace" open $bg="linear-gradient(#0b6bff, #004de6)"><Word>zoom</Word></DockApp>
        <DockRule />
        <DockApp name="Documents" $flat>{papers}</DockApp>
        <DockApp name="Trash" $flat>{trash}</DockApp>
      </Dock>
    </Screen>
  );
}
